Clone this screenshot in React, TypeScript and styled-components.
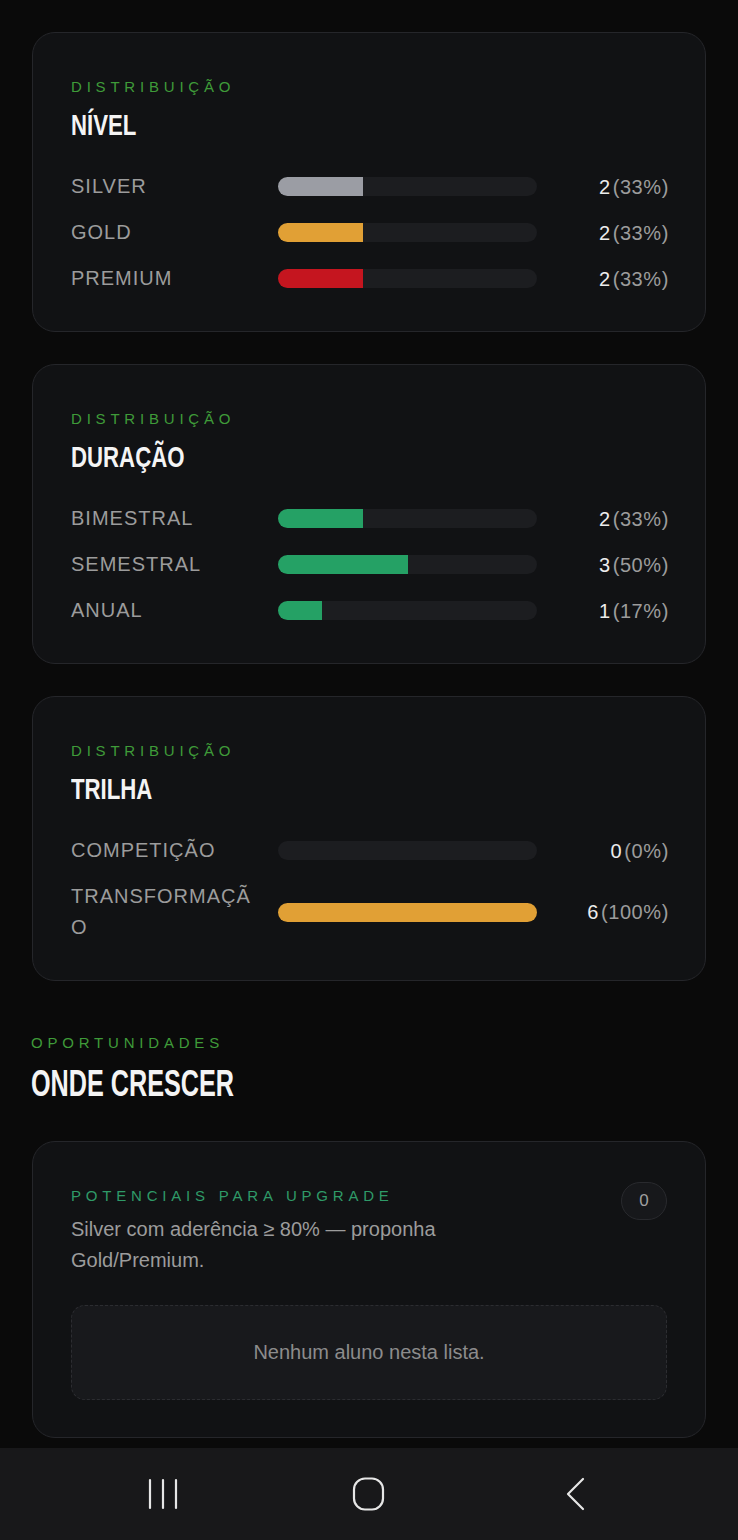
import React, { FC } from 'react';
import styled, { createGlobalStyle } from 'styled-components';

const GlobalStyle = createGlobalStyle`
  html, body {
    margin: 0;
    padding: 0;
    background: #0a0a0a;
  }
  body {
    font-family: 'Liberation Sans', Arial, sans-serif;
    color: #e8e8e8;
  }
`;

const Page = styled.div`
  width: 738px;
  display: flex;
  flex-direction: column;
`;

const Content = styled.main`
  display: flex;
  flex-direction: column;
  gap: 32px;
  padding: 32px 32px 10px 32px;
`;

const Card = styled.section`
  background: #111214;
  border: 1px solid #25262a;
  border-radius: 23px;
  padding: 44px 38px 37px 38px;
  display: flex;
  flex-direction: column;
`;

const Eyebrow = styled.div<{ $tone?: 'green' | 'teal' }>`
  font-size: 15px;
  line-height: 20px;
  letter-spacing: 4.8px;
  text-transform: uppercase;
  color: ${({ $tone }) => ($tone === 'teal' ? '#2f9a68' : '#3f9b39')};
`;

// condensed display face isn't installed, so squeeze a bold sans
const Title = styled.h2<{ $big?: boolean }>`
  margin: 11px 0 0 0;
  font-weight: 700;
  font-size: ${({ $big }) => ($big ? '36px' : '30px')};
  line-height: ${({ $big }) => ($big ? '40px' : '34px')};
  color: #f4f4f4;
  white-space: nowrap;
  transform: scaleX(${({ $big }) => ($big ? 0.7 : 0.74)});
  transform-origin: left center;
`;

const Rows = styled.div`
  margin-top: 29px;
  display: grid;
  grid-template-columns: 181px 259px 1fr;
  column-gap: 26px;
  row-gap: 15px;
  align-items: center;
`;

const Label = styled.div`
  font-size: 20px;
  line-height: 31px;
  letter-spacing: 1px;
  color: #9c9c9c;
  overflow-wrap: anywhere;
`;

const Track = styled.div`
  height: 19px;
  border-radius: 10px;
  background: #1c1d20;
  overflow: hidden;
  display: flex;
`;

const Fill = styled.div<{ $color: string }>`
  height: 100%;
  background: ${({ $color }) => $color};
`;

const Value = styled.div`
  text-align: right;
  font-size: 20px;
  line-height: 30px;
  color: #9c9c9c;
  letter-spacing: 0.6px;
  margin-right: -2px;
`;

const Count = styled.span`
  color: #ececec;
  margin-right: 2px;
`;

const SectionHead = styled.div`
  display: flex;
  flex-direction: column;
  margin: 20px 0 5px -1px;
`;

const CardHeader = styled.div`
  display: flex;
  justify-content: space-between;
  align-items: flex-start;
  gap: 16px;
`;

const HeaderText = styled.div`
  display: flex;
  flex-direction: column;
  gap: 8px;
`;

const Description = styled.p`
  margin: 0;
  max-width: 420px;
  font-size: 20px;
  line-height: 31px;
  color: #9c9c9c;
`;

const Badge = styled.div`
  margin-top: -4px;
  min-width: 46px;
  height: 38px;
  padding: 0 6px;
  box-sizing: border-box;
  border-radius: 19px;
  border: 1px solid #292a2e;
  background: #17181b;
  color: #a0a0a0;
  font-size: 17px;
  display: flex;
  align-items: center;
  justify-content: center;
`;

const EmptyBox = styled.div`
  margin-top: 29px;
  height: 93px;
  border: 1px dashed #2c2d31;
  border-radius: 14px;
  background: #18191c;
  display: flex;
  align-items: center;
  justify-content: center;
  font-size: 20px;
  color: #8c8c8c;
`;

const NavBar = styled.nav`
  height: 92px;
  background: #18181a;
  display: flex;
  align-items: center;
  justify-content: center;
  gap: 170px;
`;

type Item = { label: string; count: number; pct: number; color: string };

const nivel: Item[] = [
  { label: 'SILVER', count: 2, pct: 33, color: '#9b9da4' },
  { label: 'GOLD', count: 2, pct: 33, color: '#e1a035' },
  { label: 'PREMIUM', count: 2, pct: 33, color: '#c5151f' },
];

const duracao: Item[] = [
  { label: 'BIMESTRAL', count: 2, pct: 33, color: '#25a165' },
  { label: 'SEMESTRAL', count: 3, pct: 50, color: '#25a165' },
  { label: 'ANUAL', count: 1, pct: 17, color: '#25a165' },
];

const trilha: Item[] = [
  { label: 'COMPETIÇÃO', count: 0, pct: 0, color: '#e1a035' },
  { label: 'TRANSFORMAÇÃO', count: 6, pct: 100, color: '#e1a035' },
];

const DistributionCard: FC<{ title: string; items: Item[] }> = ({ title, items }) => (
  <Card>
    <Eyebrow>Distribuição</Eyebrow>
    <Title>{title}</Title>
    <Rows>
      {items.map(item => (
        <React.Fragment key={item.label}>
          <Label>{item.label}</Label>
          <Track>
            <Fill $color={item.color} style={{ width: `${item.pct}%` }} />
          </Track>
          <Value>
            <Count>{item.count}</Count>({item.pct}%)
          </Value>
        </React.Fragment>
      ))}
    </Rows>
  </Card>
);

const NavIcon: FC<{ kind: 'recent' | 'home' | 'back' }> = ({ kind }) => (
  <svg width="36" height="36" viewBox="0 0 36 36" fill="none" stroke="#e6e6e6" strokeWidth="2.2" strokeLinecap="round" strokeLinejoin="round">
    {kind === 'recent' && (
      <>
        <path d="M5 4v28" />
        <path d="M18 4v28" />
        <path d="M31 4v28" />
      </>
    )}
    {kind === 'home' && <rect x="3" y="2.5" width="29" height="31" rx="11" />}
    {kind === 'back' && <path d="M26 3L11 18l15 15" />}
  </svg>
);

const App: FC = () => (
  <Page>
    <GlobalStyle />
    <Content>
      <DistributionCard title="NÍVEL" items={nivel} />
      <DistributionCard title="DURAÇÃO" items={duracao} />
      <DistributionCard title="TRILHA" items={trilha} />

      <SectionHead>
        <Eyebrow>Oportunidades</Eyebrow>
        <Title $big>ONDE CRESCER</Title>
      </SectionHead>

      <Card>
        <CardHeader>
          <HeaderText>
            <Eyebrow $tone="teal">Potenciais para upgrade</Eyebrow>
            <Description>Silver com aderência ≥ 80% — proponha Gold/Premium.</Description>
          </HeaderText>
          <Badge>0</Badge>
        </CardHeader>
        <EmptyBox>Nenhum aluno nesta lista.</EmptyBox>
      </Card>
    </Content>
    <NavBar>
      <NavIcon kind="recent" />
      <NavIcon kind="home" />
      <NavIcon kind="back" />
    </NavBar>
  </Page>
);

export default App;
